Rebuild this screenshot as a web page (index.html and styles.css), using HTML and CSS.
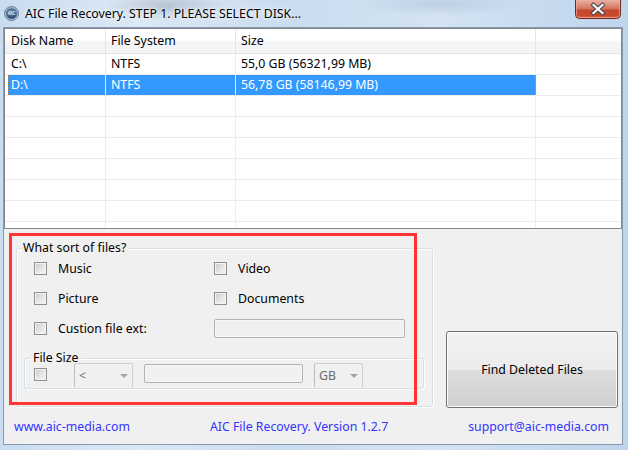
FILE: index.html
```html
<!DOCTYPE html>
<html>
<head>
<meta charset="utf-8">
<link rel="stylesheet" href="styles.css">
</head>
<body>
<div class="window">
  <div class="titlebar">
    <svg class="app-icon" viewBox="0 0 15 15" width="15" height="15">
      <defs>
        <radialGradient id="ig" cx="45%" cy="35%" r="70%">
          <stop offset="0" stop-color="#6d8fb4"/>
          <stop offset="1" stop-color="#23405f"/>
        </radialGradient>
      </defs>
      <circle cx="7.5" cy="7.5" r="7" fill="#9fb3c8" stroke="#5d7290" stroke-width="0.8"/>
      <circle cx="7.5" cy="7.5" r="5.3" fill="url(#ig)"/>
      <text x="7.5" y="9.4" text-anchor="middle" font-family="Liberation Sans, sans-serif" font-size="4.6" font-weight="bold" fill="#e6eef8">AIC</text>
    </svg>
    <span class="title">AIC File Recovery. STEP 1. PLEASE SELECT DISK...</span>
    <div class="close-btn">
      <svg viewBox="0 0 46 19" width="46" height="19">
        <defs>
          <linearGradient id="cg" x1="0" y1="0" x2="0" y2="1">
            <stop offset="0" stop-color="#eab1a4"/>
            <stop offset="0.45" stop-color="#d67762"/>
            <stop offset="0.55" stop-color="#c24a31"/>
            <stop offset="0.85" stop-color="#c9472c"/>
            <stop offset="1" stop-color="#e27b5e"/>
          </linearGradient>
        </defs>
        <path d="M0.5 0 V14.5 Q0.5 18.5 4.5 18.5 H41.5 Q45.5 18.5 45.5 14.5 V0" fill="url(#cg)" stroke="#6f2a1c" stroke-width="1"/>
        <path d="M1.5 0 V14.3 Q1.5 17.5 4.6 17.5 H41.4 Q44.5 17.5 44.5 14.3 V0" fill="none" stroke="#f0b7a6" stroke-opacity="0.6" stroke-width="1"/>
        <path d="M18.5 5 L27.5 13 M27.5 5 L18.5 13" stroke="#45464a" stroke-width="4.2" stroke-linecap="square"/>
        <path d="M18.5 5 L27.5 13 M27.5 5 L18.5 13" stroke="#ffffff" stroke-width="2.2" stroke-linecap="square"/>
      </svg>
    </div>
  </div>
  <div class="client">
    <div class="listview">
      <div class="lv-row lv-header">
        <div class="cell c1">Disk Name</div>
        <div class="cell c2">File System</div>
        <div class="cell c3">Size</div>
        <div class="cell c4"></div>
      </div>
      <div class="lv-row">
        <div class="cell c1">C:\</div>
        <div class="cell c2">NTFS</div>
        <div class="cell c3">55,0 GB (56321,99 MB)</div>
        <div class="cell c4"></div>
      </div>
      <div class="lv-row selected">
        <div class="cell c1">D:\</div>
        <div class="cell c2">NTFS</div>
        <div class="cell c3">56,78 GB (58146,99 MB)</div>
        <div class="cell c4"></div>
      </div>
      <div class="lv-row"><div class="cell c1"></div><div class="cell c2"></div><div class="cell c3"></div><div class="cell c4"></div></div>
      <div class="lv-row"><div class="cell c1"></div><div class="cell c2"></div><div class="cell c3"></div><div class="cell c4"></div></div>
      <div class="lv-row"><div class="cell c1"></div><div class="cell c2"></div><div class="cell c3"></div><div class="cell c4"></div></div>
      <div class="lv-row"><div class="cell c1"></div><div class="cell c2"></div><div class="cell c3"></div><div class="cell c4"></div></div>
      <div class="lv-row"><div class="cell c1"></div><div class="cell c2"></div><div class="cell c3"></div><div class="cell c4"></div></div>
      <div class="lv-row"><div class="cell c1"></div><div class="cell c2"></div><div class="cell c3"></div><div class="cell c4"></div></div>
      <div class="lv-row"><div class="cell c1"></div><div class="cell c2"></div><div class="cell c3"></div><div class="cell c4"></div></div>
    </div>

    <div class="panel">
      <div class="group main-group">
        <div class="group-title">What sort of files?</div>
        <div class="options">
          <div class="opt"><span class="chk"></span><span>Music</span></div>
          <div class="opt"><span class="chk"></span><span>Video</span></div>
          <div class="opt"><span class="chk"></span><span>Picture</span></div>
          <div class="opt"><span class="chk"></span><span>Documents</span></div>
          <div class="opt"><span class="chk"></span><span>Custion file ext:</span></div>
          <div class="opt"><span class="tf ext-field"></span></div>
        </div>
        <div class="group size-group">
          <div class="group-title size-title">File Size</div>
          <div class="size-row">
            <span class="chk size-chk"></span>
            <span class="combo op-combo"><span class="combo-val">&lt;</span><span class="arrow"></span></span>
            <span class="tf size-field"></span>
            <span class="combo unit-combo"><span class="combo-val">GB</span><span class="arrow"></span></span>
          </div>
        </div>
      </div>
      <button class="find-btn" type="button">Find Deleted Files</button>
    </div>

    <div class="footer">
      <span>www.aic-media.com</span>
      <span>AIC File Recovery. Version 1.2.7</span>
      <span>support@aic-media.com</span>
    </div>
  </div>
  <div class="annotation"></div>
</div>
</body>
</html>
```

FILE: styles.css
```css
* { box-sizing: border-box; }
html, body { margin: 0; padding: 0; }
body {
  width: 628px;
  height: 450px;
  overflow: hidden;
  font-family: "Noto Sans", "Open Sans", sans-serif;
  font-size: 12.3px;
  color: #000;
  background: #c4d7ec;
}
.window {
  position: relative;
  width: 628px;
  height: 450px;
  display: flex;
  flex-direction: column;
  background:
    radial-gradient(ellipse 60px 14px at 165px 6px, rgba(120,130,145,0.35), transparent),
    radial-gradient(ellipse 80px 12px at 440px 4px, rgba(150,170,195,0.35), transparent),
    linear-gradient(90deg, #c9dcf0 0%, #dbe8f5 22%, #cadcef 45%, #d3e3f3 70%, #bed4ec 100%);
}
.titlebar {
  height: 28px;
  flex: none;
  display: flex;
  align-items: flex-start;
  padding-left: 4px;
}
.app-icon { flex: none; margin-top: 6px; }
.title {
  margin-left: 6px;
  margin-top: 5px;
  line-height: 17px;
  white-space: nowrap;
  text-shadow: 0 0 6px rgba(255,255,255,0.9), 0 0 3px rgba(255,255,255,0.8);
}
.close-btn {
  margin-left: auto;
  margin-right: 7px;
  width: 46px;
  height: 19px;
  flex: none;
}
.close-btn svg { display: block; }

.client {
  margin: 0 6px 0 4px;
  height: 416px;
  flex: none;
  background: #f0f0f0;
  display: flex;
  flex-direction: column;
  box-shadow: 0 0 0 1px #8799b0;
}

/* list view */
.listview {
  height: 201px;
  flex: none;
  border: 1px solid #828790;
  background: #fff;
  overflow: hidden;
}
.lv-row {
  display: grid;
  grid-template-columns: 101px 130px 300px 1fr;
  height: 21px;
  border-bottom: 1px solid #ececec;
}
.lv-header {
  height: 25px;
  border-bottom: 1px solid #e5e5e5;
  background: linear-gradient(#ffffff 0%, #ffffff 45%, #f3f4f6 55%, #f3f4f6 100%);
}
.cell {
  border-right: 1px solid #ececec;
  padding-left: 5px;
  line-height: 20px;
  white-space: nowrap;
  overflow: hidden;
}
.lv-header .cell { line-height: 24px; border-right-color: #e3e4e6; }
.cell.c1 { padding-left: 6px; }
.cell.c4 { border-right: none; }
.selected { position: relative; }
.selected .c1 { background: linear-gradient(90deg, transparent 3px, #3399ff 3px); color: #fff; border-right-color: #dcebfb; }
.selected .c2, .selected .c3 { background: #3399ff; color: #fff; border-right-color: #dcebfb; }
.selected .c3 { border-right-color: #c48a4a; }
.selected::after {
  content: "";
  position: absolute;
  left: 3px;
  top: 0;
  width: 528px;
  height: 20px;
  border-left: 1px dotted #b97838;
}

/* bottom panel */
.panel {
  display: flex;
  align-items: flex-end;
  padding-left: 12px;
  margin-top: 19px;
  flex: none;
}
.group {
  border: 1px solid #d5dfe5;
  border-radius: 3px;
  box-shadow: inset 1px 1px 0 #ffffff, 1px 1px 0 #ffffff;
  display: flex;
  flex-direction: column;
}
.main-group { width: 417px; height: 159px; flex: none; }
.group-title {
  align-self: flex-start;
  background: #f0f0f0;
  line-height: 16px;
  padding: 0 2px;
  margin: -9px 0 0 4px;
  white-space: nowrap;
}
.options {
  display: grid;
  grid-template-columns: 180px 191px;
  grid-auto-rows: 20px;
  row-gap: 10px;
  margin: 2px 0 0 17px;
}
.opt {
  display: flex;
  align-items: center;
  gap: 11px;
  white-space: nowrap;
}
.chk {
  display: block;
  width: 13px;
  height: 13px;
  flex: none;
  border: 1px solid #8f8f8f;
  background: linear-gradient(135deg, #c6c9ce 0%, #e3e4e6 50%, #f7f7f7 100%);
  box-shadow: inset 0 0 0 1px #f3f3f3;
}
.tf {
  display: block;
  border: 1px solid #b2b2b2;
  border-radius: 2px;
  background: #f0f0f0;
  box-shadow: inset 0 0 0 1px #f6f6f6;
}
.ext-field { width: 191px; height: 19px; margin-top: 1px; }

.size-group {
  width: 400px;
  height: 31px;
  margin: 20px 0 17px 7px;
}
.size-title { margin: -9px 0 -7px 6px; }
.size-row {
  display: flex;
  align-items: flex-start;
  height: 29px;
}
.size-chk { margin: 9px 0 0 9px; }
.combo {
  display: flex;
  align-items: center;
  justify-content: space-between;
  height: 24px;
  border: 1px solid #cfcfcf;
  border-left-color: #bdbdbd;
  border-bottom: none;
  border-radius: 2px 2px 0 0;
  background: #f0f0f0;
  color: #6d6d6d;
  padding: 0 4px 0 4px;
  flex: none;
}
.combo-val { line-height: 20px; }
.arrow {
  width: 0;
  height: 0;
  border-left: 4px solid transparent;
  border-right: 4px solid transparent;
  border-top: 4px solid #a2a2a2;
}
.op-combo { width: 59px; margin: 4px 0 0 27px; }
.size-field { width: 159px; height: 19px; margin: 5px 0 0 11px; flex: none; }
.unit-combo { width: 49px; margin: 4px 0 0 11px; }

.find-btn {
  width: 172px;
  height: 77px;
  margin: 0 0 -1px 13px;
  flex: none;
  border: 1px solid #707070;
  border-radius: 3px;
  background: linear-gradient(#f2f2f2 0%, #ebebeb 50%, #dddddd 50%, #cfcfcf 100%);
  box-shadow: inset 0 0 0 1px #fbfbfb;
  font-family: "Noto Sans", "Open Sans", sans-serif;
  font-size: 12.3px;
  color: #000;
  padding: 0;
}

.footer {
  display: flex;
  justify-content: space-between;
  margin-top: 12px;
  padding: 0 13px 0 10px;
  line-height: 16px;
  color: #3333ff;
  white-space: nowrap;
}

.annotation {
  position: absolute;
  left: 9px;
  top: 233px;
  width: 408px;
  height: 172px;
  border: 3px solid #ff3535;
}
```
